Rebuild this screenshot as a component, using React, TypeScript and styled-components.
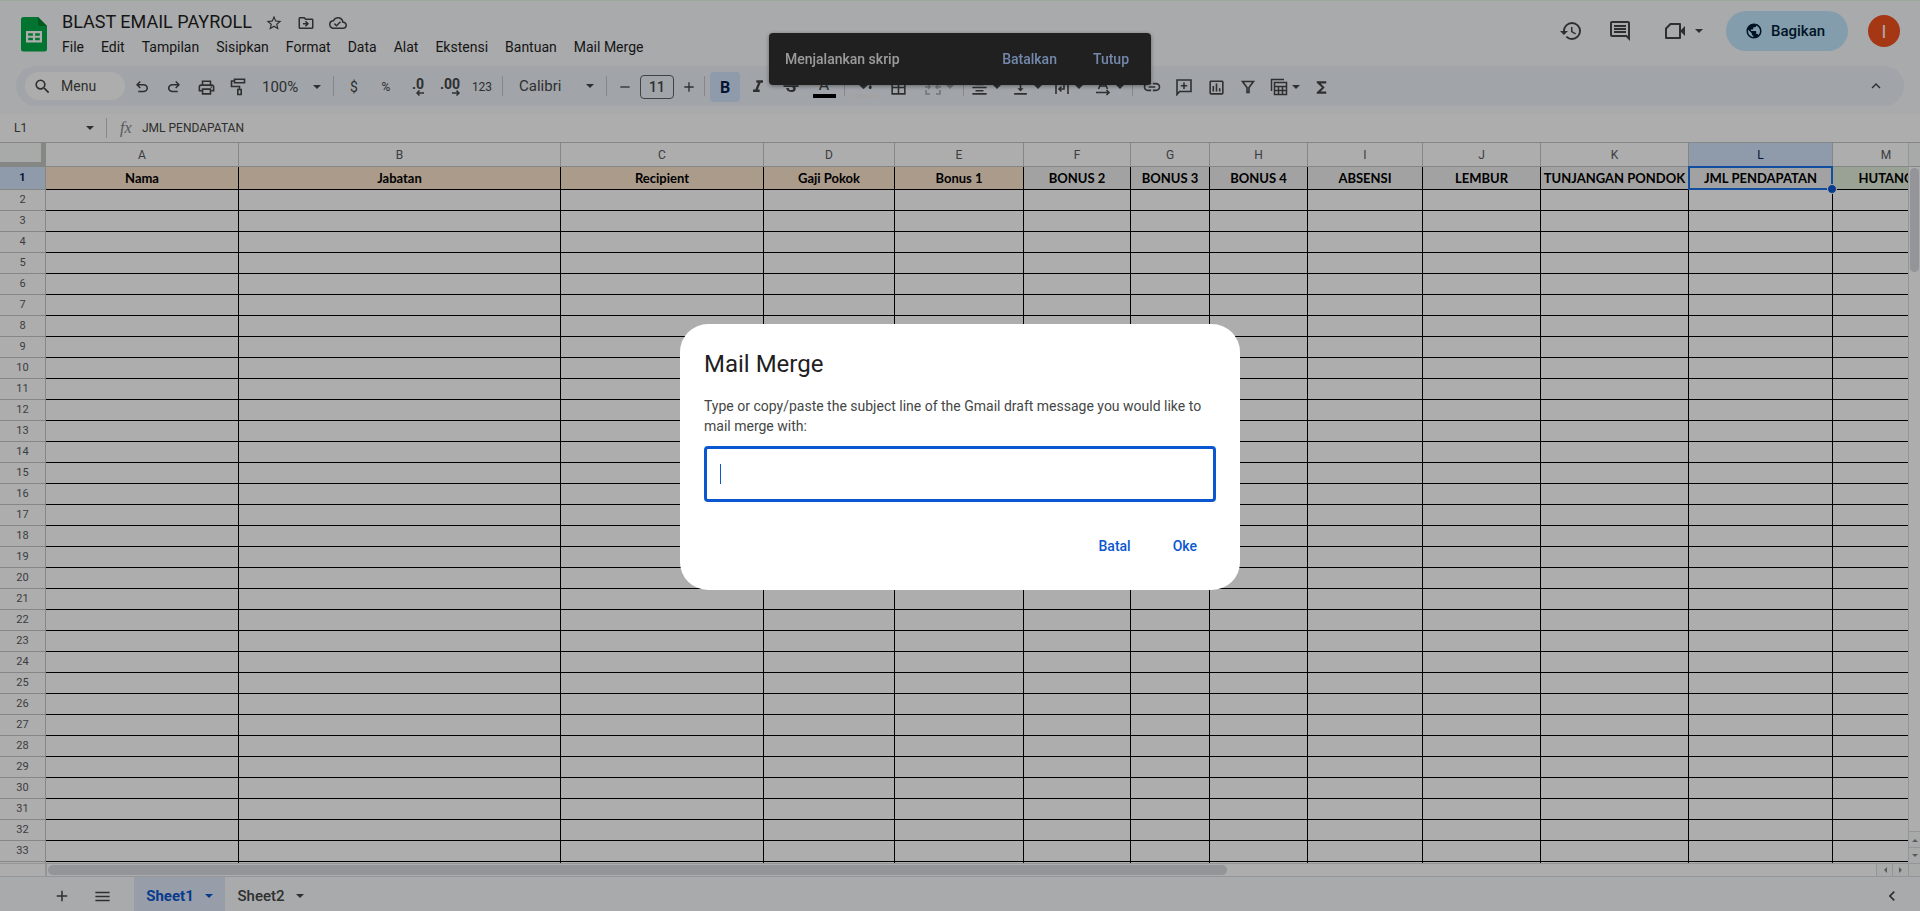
import React from "react";
import styled, { createGlobalStyle } from "styled-components";
import {
  MdStarBorder,
  MdOutlineDriveFileMove,
  MdOutlineCloudDone,
  MdHistory,
  MdOutlineComment,
  MdPublic,
  MdSearch,
  MdOutlinePrint,
  MdFormatItalic,
  MdStrikethroughS,
  MdBorderAll,
  MdFormatAlignCenter,
  MdVerticalAlignBottom,
  MdLink,
  MdOutlineInsertChart,
  MdFunctions,
  MdAdd,
  MdRemove,
  MdMenu,
  MdExpandLess,
  MdChevronLeft,
} from "react-icons/md";

const ui = `Roboto, "Liberation Sans", sans-serif`;
const line = "#c4c7c5";

const GlobalStyle = createGlobalStyle`
  *, *::before, *::after { box-sizing: border-box; }
  body { margin: 0; background: #fff; font-family: ${ui}; overflow: hidden; }
  button, input, select { font: inherit; color: inherit; border: 0; background: none; padding: 0; margin: 0; outline: 0; }
  button { display: inline-flex; align-items: center; justify-content: center; }
  a { color: inherit; text-decoration: none; }
  svg { display: block; flex: none; }
`;

const Page = styled.div`
  display: flex;
  flex-direction: column;
  height: 100vh;
  overflow: hidden;
`;

/* ---------- header ---------- */

const Top = styled.header`
  background: #f9fbfd;
  border-top: 1px solid #e4fbe2;
  padding-bottom: 8px;
`;

const TitleBar = styled.div`
  display: flex;
  height: 65px;
  padding: 0 20px 0 14px;
`;

const Logo = styled.a`
  display: flex;
  width: 40px;
  padding: 16px 7px 0;
`;

const Titles = styled.div`
  flex: 1;
  padding: 7px 0 0 8px;
`;

const NameRow = styled.div`
  display: flex;
  align-items: center;
  height: 28px;
  color: #444746;
`;

const DocName = styled.h1`
  margin: 0 6px 0 0;
  font-size: 18px;
  line-height: 28px;
  font-weight: 400;
  color: #1f1f1f;
`;

const NameButton = styled.button`
  width: 32px;
  height: 28px;
  padding-top: 2px;
`;

const Menus = styled.nav`
  display: flex;
  gap: 17px;
  font-size: 14px;
  line-height: 22px;
  color: #1f1f1f;
`;

const Actions = styled.div`
  display: flex;
  align-items: center;
  height: 60px;
  color: #444746;
`;

const HeadButton = styled.button`
  width: 49px;
  height: 40px;
`;

const MeetButton = styled.button`
  width: 77px;
  height: 40px;
  gap: 8px;
  margin-right: 5px;
`;

const Share = styled.button`
  width: 122px;
  height: 40px;
  padding-right: 4px;
  gap: 8px;
  border-radius: 20px;
  background: #c2e7ff;
  color: #001d35;
  font-size: 15px;
  font-weight: 500;
`;

const Avatar = styled.button`
  width: 32px;
  height: 32px;
  margin-left: 20px;
  border-radius: 50%;
  background: #f4511e;
  color: #fff;
  font-size: 18px;
`;

/* ---------- toolbar ---------- */

const Toolbar = styled.div`
  display: flex;
  align-items: center;
  height: 40px;
  margin: 0 16px;
  padding: 0 12px 0 9px;
  border-radius: 20px;
  background: #edf2fa;
  color: #444746;
  font-size: 14px;
`;

const SearchBox = styled.label`
  display: flex;
  align-items: center;
  gap: 9px;
  width: 100px;
  height: 28px;
  margin-right: 1px;
  padding-left: 8px;
  border-radius: 14px;
  background: #fff;

  input { width: 56px; }
  input::placeholder { color: #444746; opacity: 1; }
`;

const Group = styled.div<{ $gap?: number }>`
  display: flex;
  align-items: center;
  gap: ${(p) => p.$gap ?? 0}px;
  padding-top: 2px;
`;

const Tool = styled.button<{ $w?: number; $active?: boolean; $dim?: boolean }>`
  width: ${(p) => p.$w ?? 32}px;
  height: 30px;
  border-radius: 4px;
  background: ${(p) => (p.$active ? "#d3e3fd" : "transparent")};
  color: ${(p) => (p.$active ? "#041e49" : "inherit")};
  opacity: ${(p) => (p.$dim ? 0.4 : 1)};
`;

const SplitTool = styled(Tool)`
  gap: 4px;
`;

const Light = styled.span`
  font-size: 12px;
`;

const Bold = styled.span`
  font-size: 16px;
  font-weight: 700;
`;

const Decimal = styled.span`
  display: flex;
  flex-direction: column;
  align-items: flex-end;
  font-size: 14px;
  line-height: 12px;
  font-weight: 700;
`;

const Swatch = styled.span<{ $color: string }>`
  display: flex;
  flex-direction: column;
  align-items: center;
  justify-content: flex-start;
  width: 23px;
  height: 22px;
  border-bottom: 4px solid ${(p) => p.$color};
  font-size: 16px;
  line-height: 18px;
`;

const Picker = styled.label<{ $w: number }>`
  display: flex;
  align-items: center;
  width: ${(p) => p.$w}px;
  height: 30px;
  padding: 0 4px 0 8px;
  font-size: 15px;

  select { flex: 1; min-width: 0; appearance: none; }
`;

const SizeInput = styled.input`
  width: 34px;
  height: 24px;
  margin: 0 5px;
  border: 1px solid #5f6368;
  border-radius: 4px;
  text-align: center;
  font-weight: 500;
`;

const Rule = styled.span<{ $m?: number }>`
  width: 1px;
  height: 20px;
  margin: 0 ${(p) => p.$m ?? 4}px;
  background: #c7c7c7;
`;

const Spacer = styled.span`
  flex: 1;
`;

/* ---------- formula bar ---------- */

const FormulaBar = styled.div`
  display: flex;
  align-items: center;
  height: 29px;
  border-bottom: 1px solid ${line};
  background: #fff;
  color: #444746;
  font-size: 12px;
`;

const NameBox = styled.label`
  display: flex;
  align-items: center;
  width: 98px;
  padding: 0 4px 0 14px;

  input { flex: 1; min-width: 0; }
`;

const Fx = styled.span`
  width: 22px;
  margin-left: 5px;
  font: italic 16px/20px "Liberation Serif", serif;
  color: #80868b;
`;

const FormulaInput = styled.input`
  flex: 1;
`;

/* ---------- grid ---------- */

const GridArea = styled.main`
  display: flex;
  flex: 1;
  min-height: 0;
  background: #fff;
`;

const Viewport = styled.div`
  flex: 1;
  min-width: 0;
  overflow: hidden;
`;

const Sheet = styled.table`
  table-layout: fixed;
  border-collapse: separate;
  border-spacing: 0;

  th, td { padding: 0; overflow: visible; }
`;

const Corner = styled.td`
  height: 24px;
  background: #f8f9fa;
  border-right: 5px solid ${line};
  border-bottom: 5px solid ${line};
`;

const ColHead = styled.th<{ $on?: boolean }>`
  height: 24px;
  border-right: 1px solid ${line};
  border-bottom: 1px solid ${line};
  background: ${(p) => (p.$on ? "#d3e3fd" : "#fff")};
  color: ${(p) => (p.$on ? "#041e49" : "#575b5f")};
  font-size: 12px;
  font-weight: 400;
`;

const RowHead = styled.th<{ $on?: boolean }>`
  height: ${(p) => (p.$on ? 23 : 21)}px;
  border-right: 1px solid ${line};
  border-bottom: 1px solid ${line};
  background: ${(p) => (p.$on ? "#d3e3fd" : "#fff")};
  color: ${(p) => (p.$on ? "#041e49" : "#575b5f")};
  font-size: 11px;
  line-height: 16px;
  font-weight: ${(p) => (p.$on ? 700 : 400)};
`;

const Cell = styled.td<{ $fill?: string }>`
  position: relative;
  border-right: 1px solid #000;
  border-bottom: 1px solid #000;
  background: ${(p) => p.$fill ?? "#fff"};
  color: #000;
  font-family: Lato, "Liberation Sans", sans-serif;
  font-size: 13px;
  line-height: 18px;
  font-weight: 700;
  text-align: center;
  white-space: nowrap;
`;

const Selection = styled.span`
  position: absolute;
  inset: -1px;
  border: 2px solid #1a73e8;
  z-index: 1;

  &::after {
    content: "";
    position: absolute;
    right: -6px;
    bottom: -6px;
    width: 10px;
    height: 10px;
    border: 1px solid #fff;
    border-radius: 50%;
    background: #0b57d0;
  }
`;

const VScroll = styled.div`
  display: flex;
  flex-direction: column;
  width: 12px;
  border-left: 1px solid #dadce0;
`;

const VHead = styled.div`
  height: 24px;
  border-bottom: 1px solid ${line};
  background: #f8f9fa;
`;

const VTrack = styled.div`
  flex: 1;
  padding: 1px;
`;

const VThumb = styled.div`
  height: 104px;
  border-radius: 5px;
  background: #dadce0;
`;

const VStep = styled.button`
  height: 16px;
  border-top: 1px solid #dadce0;
  background: #f8f9fa;
  color: #80868b;
`;

const HScroll = styled.div`
  display: flex;
  height: 14px;
  border-top: 1px solid #dadce0;
  border-bottom: 1px solid #dadce0;
`;

const HCorner = styled.div`
  width: 47px;
  border-right: 2px solid #dadce0;
`;

const HTrack = styled.div`
  display: flex;
  flex: 1;
  padding: 1px;
`;

const HThumb = styled.div`
  flex: 20;
  border-radius: 5px;
  background: #dadce0;
`;

const HRest = styled.div`
  flex: 11;
`;

const HStep = styled.button`
  width: 16px;
  border-left: 1px solid #dadce0;
  background: #f8f9fa;
  color: #80868b;
`;

const HEnd = styled.div`
  width: 12px;
  border-left: 1px solid #dadce0;
  background: #f8f9fa;
`;

/* ---------- sheet tabs ---------- */

const Tabs = styled.footer`
  display: flex;
  align-items: center;
  height: 34px;
  padding: 0 8px 0 42px;
  background: #f9fbfd;
  color: #444746;
`;

const SheetTools = styled.div`
  display: flex;
  margin-right: 12px;
`;

const TabTool = styled.button`
  width: 40px;
  height: 34px;
  padding-top: 4px;
`;

const Tab = styled.button<{ $on?: boolean }>`
  gap: 11px;
  width: 91px;
  height: 34px;
  padding-top: 3px;
  background: ${(p) => (p.$on ? "#e1e9f9" : "transparent")};
  color: ${(p) => (p.$on ? "#0b57d0" : "#444746")};
  font-size: 15px;
  font-weight: ${(p) => (p.$on ? 700 : 500)};
`;

/* ---------- toast and dialog ---------- */

const Toast = styled.div`
  position: fixed;
  top: 33px;
  left: calc(50% - 191px);
  display: flex;
  align-items: center;
  width: 382px;
  height: 52px;
  padding: 0 22px 0 16px;
  gap: 36px;
  border-radius: 4px;
  background: #303030;
  color: #e3e3e3;
  font-size: 14px;
  font-weight: 500;
  box-shadow: 0 1px 4px rgba(0, 0, 0, 0.4);
  z-index: 5;
`;

const ToastText = styled.span`
  flex: 1;
`;

const ToastButton = styled.button`
  color: #a8c7fa;
`;

const Scrim = styled.div`
  position: fixed;
  inset: 0;
  display: flex;
  align-items: center;
  justify-content: center;
  padding-top: 3px;
  background: rgba(0, 0, 0, 0.32);
  z-index: 10;
`;

const Dialog = styled.form`
  width: 560px;
  padding: 24px;
  border-radius: 28px;
  background: #fff;
`;

const DialogTitle = styled.h2`
  margin: 0 0 16px;
  font-size: 24px;
  line-height: 32px;
  font-weight: 400;
  color: #1f1f1f;
`;

const Question = styled.label`
  display: block;
  margin-bottom: 10px;
  font-size: 14px;
  line-height: 20px;
  color: #444746;
`;

const Field = styled.div`
  position: relative;
`;

const Answer = styled.input`
  display: block;
  width: 100%;
  height: 56px;
  padding: 0 13px;
  border: 3px solid #0b57d0;
  border-radius: 4px;
  font-size: 16px;
  caret-color: transparent;
`;

const Caret = styled.span`
  position: absolute;
  left: 16px;
  top: 18px;
  width: 1px;
  height: 20px;
  background: #0b57d0;
`;

const Buttons = styled.div`
  display: flex;
  justify-content: flex-end;
  gap: 4px;
  margin-top: 24px;
`;

const TextButton = styled.button`
  height: 40px;
  padding: 0 19px;
  border-radius: 20px;
  color: #0b57d0;
  font-size: 14px;
  font-weight: 500;
`;

/* ---------- drawings ---------- */

const Arrow = () => (
  <svg width="8" height="4" viewBox="0 0 8 4" fill="currentColor" aria-hidden>
    <path d="M0 0h8L4 4z" />
  </svg>
);

const Step = ({ d }: { d: string }) => (
  <svg width="6" height="6" viewBox="0 0 6 6" fill="currentColor" aria-hidden>
    <path d={d} />
  </svg>
);

const Line = ({ children, width = 1.6 }: { children: React.ReactNode; width?: number }) => (
  <svg width="18" height="18" viewBox="0 0 18 18" fill="none" stroke="currentColor" strokeWidth={width} aria-hidden>
    {children}
  </svg>
);

const Glyph = ({ d }: { d: string }) => (
  <svg width="18" height="18" viewBox="0 -960 960 960" fill="currentColor" aria-hidden>
    <path d={d} />
  </svg>
);

const undoPath =
  "M280-200v-80h284q63 0 109.500-40T720-420q0-60-46.500-100T564-560H312l104 104-56 56-200-200 200-200 56 56-104 104h252q97 0 169.500 63T800-420q0 94-72.500 157T564-200H280Z";
const redoPath =
  "M396-200q-97 0-169.500-63T154-420q0-94 72.500-157T396-640h252L544-744l56-56 200 200-200 200-56-56 104-104H396q-63 0-109.500 40T240-420q0 60 46.500 100T396-280h284v80H396Z";

const SheetsLogo = () => (
  <svg width="26" height="35" viewBox="0 0 26 35" aria-hidden>
    <path d="M2.500 0H17l9 9v23a2.500 2.500 0 0 1-2.500 2.500h-21A2.500 2.500 0 0 1 0 32V2.500A2.500 2.500 0 0 1 2.500 0z" fill="#00ac47" />
    <path d="M17 0l9 9h-6.500A2.500 2.500 0 0 1 17 6.500z" fill="#00832d" />
    <path d="M5 14h16v11.500H5zM7.200 16.200v2.500h4.700v-2.500zm6.900 0v2.500h4.700v-2.500zM7.200 20.800v2.500h4.700v-2.500zm6.900 0v2.500h4.700v-2.500z" fill="#fff" fillRule="evenodd" />
  </svg>
);

const MeetIcon = () => (
  <svg width="24" height="24" viewBox="0 0 24 24" aria-hidden>
    <path d="M7.500 5H17v14H3V9.500z" fill="none" stroke="currentColor" strokeWidth="2" strokeLinejoin="round" />
    <path d="M17 12l5-5v10z" fill="currentColor" />
  </svg>
);

const Bucket = () => (
  <svg width="18" height="13" viewBox="0 0 24 17" fill="currentColor" aria-hidden>
    <path d="M16.560 8.940L7.620 0 6.210 1.410l2.380 2.380-5.150 5.150c-.59.59-.59 1.540 0 2.120l5.500 5.500c.29.29.68.44 1.060.44s.77-.15 1.060-.44l5.500-5.500c.59-.58.59-1.530 0-2.120zM5.210 10L10 5.210 14.790 10H5.210zM19 11.500s-2 2.170-2 3.500c0 1.100.9 2 2 2s2-.9 2-2c0-1.330-2-3.500-2-3.500z" />
  </svg>
);

const TinyArrow = ({ flip }: { flip?: boolean }) => (
  <svg width="8" height="6" viewBox="0 0 8 6" fill="none" stroke="currentColor" strokeWidth="1.500" aria-hidden>
    <path d={flip ? "M0 3h7M4.500.5L7 3 4.500 5.500" : "M8 3H1M3.500.5L1 3l2.500 2.500"} />
  </svg>
);

/* ---------- data ---------- */

const menus = ["File", "Edit", "Tampilan", "Sisipkan", "Format", "Data", "Alat", "Ekstensi", "Bantuan", "Mail Merge"];

const peach = "#fce5cd";
const grey = "#efefef";

const columns = [
  { id: "A", w: 193, label: "Nama", fill: peach },
  { id: "B", w: 322, label: "Jabatan", fill: peach },
  { id: "C", w: 203, label: "Recipient", fill: peach },
  { id: "D", w: 131, label: "Gaji Pokok", fill: peach },
  { id: "E", w: 129, label: "Bonus 1", fill: peach },
  { id: "F", w: 107, label: "BONUS 2", fill: grey },
  { id: "G", w: 79, label: "BONUS 3", fill: grey },
  { id: "H", w: 98, label: "BONUS 4", fill: grey },
  { id: "I", w: 115, label: "ABSENSI", fill: grey },
  { id: "J", w: 118, label: "LEMBUR", fill: grey },
  { id: "K", w: 148, label: "TUNJANGAN PONDOK", fill: grey },
  { id: "L", w: 144, label: "JML PENDAPATAN", fill: grey },
  { id: "M", w: 107, label: "HUTANG", fill: "#e2efda" },
];

const sheetWidth = 46 + columns.reduce((sum, c) => sum + c.w, 0);
const rows = Array.from({ length: 32 }, (_, i) => i + 2);

export default function App() {
  return (
    <Page>
      <GlobalStyle />
      <Top>
        <TitleBar>
          <Logo href="#" aria-label="Spreadsheet">
            <SheetsLogo />
          </Logo>
          <Titles>
            <NameRow>
              <DocName>BLAST EMAIL PAYROLL</DocName>
              <NameButton aria-label="Bintangi"><MdStarBorder size={18} /></NameButton>
              <NameButton aria-label="Pindahkan"><MdOutlineDriveFileMove size={18} /></NameButton>
              <NameButton aria-label="Status dokumen"><MdOutlineCloudDone size={18} /></NameButton>
            </NameRow>
            <Menus>
              {menus.map((m) => (
                <button key={m}>{m}</button>
              ))}
            </Menus>
          </Titles>
          <Actions>
            <HeadButton aria-label="Histori"><MdHistory size={24} /></HeadButton>
            <HeadButton aria-label="Komentar"><MdOutlineComment size={24} /></HeadButton>
            <MeetButton aria-label="Meet"><MeetIcon /><Arrow /></MeetButton>
            <Share><MdPublic size={18} />Bagikan</Share>
            <Avatar>I</Avatar>
          </Actions>
        </TitleBar>

        <Toolbar>
          <SearchBox>
            <MdSearch size={19} />
            <input placeholder="Menu" aria-label="Menu" />
          </SearchBox>
          <Group>
            <Tool aria-label="Urungkan"><Glyph d={undoPath} /></Tool>
            <Tool aria-label="Ulangi"><Glyph d={redoPath} /></Tool>
            <Tool aria-label="Cetak"><MdOutlinePrint size={19} /></Tool>
            <Tool aria-label="Salin format">
              <Line>
                <path d="M5.500 1.300h10v3.400h-10zM5.500 3H2.500v5.500h8v3M8.800 11.500h3.400v5H8.800z" />
              </Line>
            </Tool>
            <Picker $w={71}>
              <select aria-label="Zoom"><option>100%</option></select>
              <Arrow />
            </Picker>
          </Group>
          <Rule $m={8} />
          <Group>
            <Tool $w={24}>$</Tool>
            <Tool $w={40}><Light>%</Light></Tool>
            <Tool $w={24} aria-label="Kurangi desimal"><Decimal>.0<TinyArrow /></Decimal></Tool>
            <Tool $w={40} aria-label="Tambah desimal"><Decimal>.00<TinyArrow flip /></Decimal></Tool>
            <Tool $w={24}><Light>123</Light></Tool>
          </Group>
          <Rule $m={8} />
          <Picker $w={87}>
            <select aria-label="Font"><option>Calibri</option></select>
            <Arrow />
          </Picker>
          <Rule $m={8} />
          <Group>
            <Tool $w={20} aria-label="Perkecil font"><MdRemove size={16} /></Tool>
            <SizeInput defaultValue="11" aria-label="Ukuran font" />
            <Tool $w={20} aria-label="Perbesar font"><MdAdd size={16} /></Tool>
          </Group>
          <Rule $m={5} />
          <Group $gap={3}>
            <Tool $w={30} $active><Bold>B</Bold></Tool>
            <Tool $w={30} aria-label="Miring"><MdFormatItalic size={20} /></Tool>
            <Tool $w={30} aria-label="Coret"><MdStrikethroughS size={20} /></Tool>
            <Tool $w={30}><Swatch $color="#000">A</Swatch></Tool>
          </Group>
          <Rule $m={5} />
          <Group $gap={3}>
            <Tool $w={30} aria-label="Warna isi"><Swatch $color="#efefef"><Bucket /></Swatch></Tool>
            <Tool $w={30} aria-label="Batas"><MdBorderAll size={19} /></Tool>
            <SplitTool $w={46} $dim aria-label="Gabungkan sel">
              <Line>
                <path d="M6 2H2v4M12 2h4v4M6 16H2v-4M12 16h4v-4M1 9h5M4 7l2 2-2 2M17 9h-5M14 7l-2 2 2 2" />
              </Line>
              <Arrow />
            </SplitTool>
          </Group>
          <Rule $m={1} />
          <Group>
            <SplitTool $w={41} aria-label="Ratakan"><MdFormatAlignCenter size={19} /><Arrow /></SplitTool>
            <SplitTool $w={41} aria-label="Ratakan vertikal"><MdVerticalAlignBottom size={19} /><Arrow /></SplitTool>
            <SplitTool $w={41} aria-label="Penggabungan teks">
              <Line>
                <path d="M3 2v14M15 2v14M5 6h6v5H6M8.500 8.500L6 11l2.500 2.500" />
              </Line>
              <Arrow />
            </SplitTool>
            <SplitTool $w={41} aria-label="Rotasi teks">
              <Line>
                <path d="M4.500 11L9 1l4.500 10M6 8h6M2 14.500h13M12.500 12l2.500 2.500-2.500 2.500" />
              </Line>
              <Arrow />
            </SplitTool>
          </Group>
          <Rule $m={3} />
          <Group>
            <Tool aria-label="Link"><MdLink size={20} /></Tool>
            <Tool aria-label="Komentar baru">
              <Line>
                <path d="M2 16.500V2h14v11.500H4.500zM9 4.500v6.500M5.800 7.800h6.400" />
              </Line>
            </Tool>
            <Tool aria-label="Diagram"><MdOutlineInsertChart size={19} /></Tool>
            <Tool aria-label="Filter">
              <Line>
                <path d="M3.500 3.500h11L10 9.500v5H8v-5z" />
              </Line>
            </Tool>
            <SplitTool $w={42} aria-label="Tampilan tabel">
              <Line width={1.5}>
                <path d="M1.500 13V1.500H14M4.500 4.500h12v12h-12zM4.500 8.500h12M4.500 12.500h12M8.500 8.500v8M12.500 8.500v8" />
              </Line>
              <Arrow />
            </SplitTool>
            <Tool $w={30} aria-label="Fungsi"><MdFunctions size={19} /></Tool>
          </Group>
          <Spacer />
          <Tool aria-label="Sembunyikan menu"><MdExpandLess size={18} /></Tool>
        </Toolbar>
      </Top>

      <FormulaBar>
        <NameBox>
          <input defaultValue="L1" aria-label="Kotak nama" />
          <Arrow />
        </NameBox>
        <Rule $m={8} />
        <Fx>fx</Fx>
        <FormulaInput defaultValue="JML PENDAPATAN" aria-label="Formula" />
      </FormulaBar>

      <GridArea>
        <Viewport>
          <Sheet style={{ width: sheetWidth }}>
            <colgroup>
              <col style={{ width: 46 }} />
              {columns.map((c) => (
                <col key={c.id} style={{ width: c.w }} />
              ))}
            </colgroup>
            <thead>
              <tr>
                <Corner />
                {columns.map((c) => (
                  <ColHead key={c.id} scope="col" $on={c.id === "L"}>{c.id}</ColHead>
                ))}
              </tr>
            </thead>
            <tbody>
              <tr>
                <RowHead scope="row" $on>1</RowHead>
                {columns.map((c) => (
                  <Cell key={c.id} $fill={c.fill}>
                    {c.label}
                    {c.id === "L" && <Selection />}
                  </Cell>
                ))}
              </tr>
              {rows.map((r) => (
                <tr key={r}>
                  <RowHead scope="row">{r}</RowHead>
                  {columns.map((c) => (
                    <Cell key={c.id} />
                  ))}
                </tr>
              ))}
              <tr>
                <RowHead />
                {columns.map((c) => (
                  <Cell key={c.id} />
                ))}
              </tr>
            </tbody>
          </Sheet>
        </Viewport>
        <VScroll>
          <VHead />
          <VTrack><VThumb /></VTrack>
          <VStep aria-label="Gulir ke atas"><Step d="M0 5h6L3 2z" /></VStep>
          <VStep aria-label="Gulir ke bawah"><Step d="M0 1h6L3 4z" /></VStep>
        </VScroll>
      </GridArea>
      <HScroll>
        <HCorner />
        <HTrack><HThumb /><HRest /></HTrack>
        <HStep aria-label="Gulir ke kiri"><Step d="M5 0v6L2 3z" /></HStep>
        <HStep aria-label="Gulir ke kanan"><Step d="M1 0v6l3-3z" /></HStep>
        <HEnd />
      </HScroll>

      <Tabs>
        <SheetTools>
          <TabTool aria-label="Tambah sheet"><MdAdd size={18} /></TabTool>
          <TabTool aria-label="Semua sheet"><MdMenu size={19} /></TabTool>
        </SheetTools>
        <Tab $on>Sheet1<Arrow /></Tab>
        <Tab>Sheet2<Arrow /></Tab>
        <Spacer />
        <TabTool aria-label="Panel samping"><MdChevronLeft size={20} /></TabTool>
      </Tabs>

      <Toast role="status">
        <ToastText>Menjalankan skrip</ToastText>
        <ToastButton>Batalkan</ToastButton>
        <ToastButton>Tutup</ToastButton>
      </Toast>

      <Scrim>
        <Dialog role="dialog" aria-labelledby="dialog-title" onSubmit={(e) => e.preventDefault()}>
          <DialogTitle id="dialog-title">Mail Merge</DialogTitle>
          <Question htmlFor="subject">
            Type or copy/paste the subject line of the Gmail draft message you would like to mail merge with:
          </Question>
          <Field>
            <Answer id="subject" />
            <Caret />
          </Field>
          <Buttons>
            <TextButton type="button">Batal</TextButton>
            <TextButton type="submit">Oke</TextButton>
          </Buttons>
        </Dialog>
      </Scrim>
    </Page>
  );
}
